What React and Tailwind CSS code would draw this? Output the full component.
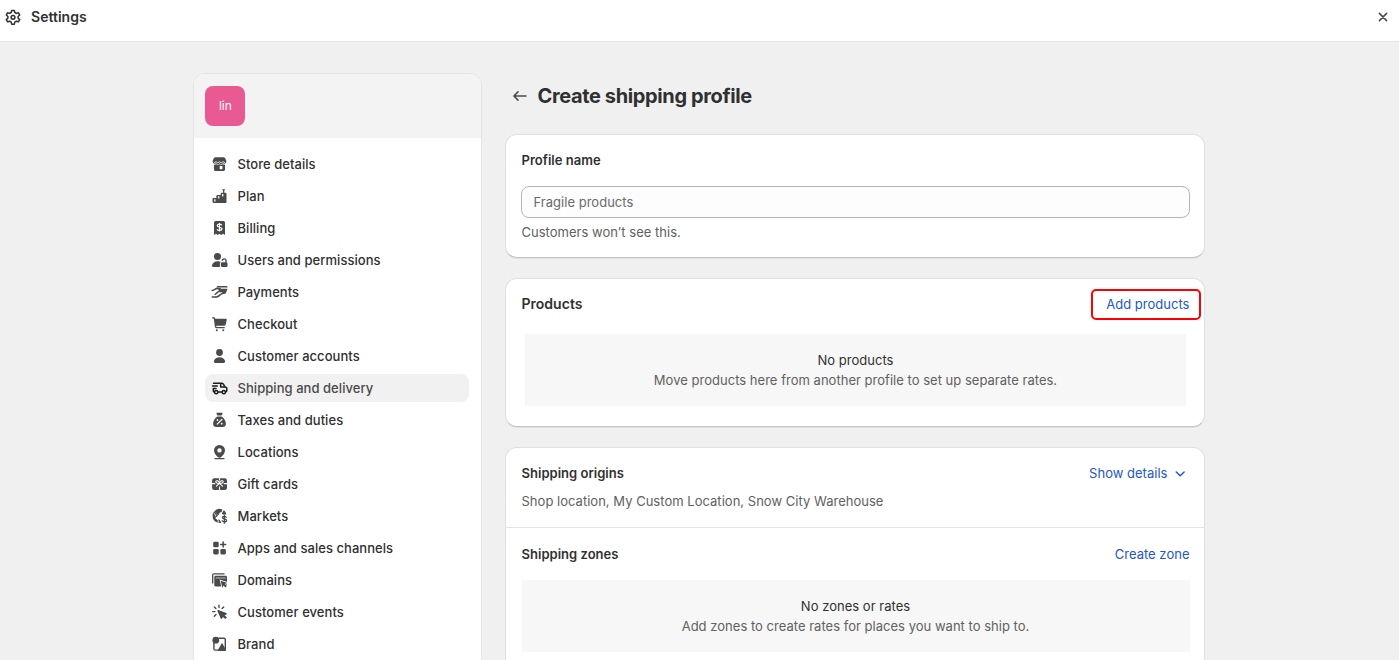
import clsx from 'clsx'

const Icon = ({ children, className, viewBox = '0 0 20 20' }) => (
  <svg viewBox={viewBox} fill="currentColor" className={clsx('h-5 w-5 shrink-0', className)}>
    {children}
  </svg>
)

// nav icons sit half a pixel to the right of their box
const NavIcon = ({ children, className }) => (
  <Icon viewBox="-0.5 0 20 20" className={className}>
    {children}
  </Icon>
)

const GearIcon = () => (
  <Icon className="text-[#303030]">
    <g fill="none" stroke="currentColor" strokeWidth="1.5" strokeLinejoin="round">
      <path d="M8.700 3.400h2.600l.5 2.100 1.500.9 2.100-.6 1.300 2.200-1.600 1.500v1.600l1.600 1.500-1.300 2.200-2.100-.6-1.500.9-.5 2.100H8.700l-.5-2.100-1.500-.9-2.100.6-1.300-2.200 1.600-1.500V9.500L3.300 8l1.300-2.200 2.100.6 1.500-.9z" />
      <circle cx="10" cy="10.300" r="1.900" />
    </g>
  </Icon>
)

const StoreIcon = () => (
  <NavIcon>
    <path d="M6 3.300h8c.7 0 1.300.4 1.700 1l1.100 2.500v.7a2.100 2.100 0 0 1-3.400 1.700 2.200 2.200 0 0 1-3.400 0 2.200 2.200 0 0 1-3.400 0A2.100 2.100 0 0 1 3.200 7.500v-.7l1.100-2.500c.4-.6 1-1 1.700-1z" />
    <path fillRule="evenodd" d="M4.500 10.600c.8.100 1.600 0 2.200-.4 1 .6 2.300.6 3.300 0 1 .6 2.300.6 3.300 0 .6.400 1.400.5 2.200.4v4.900c0 .8-.7 1.500-1.500 1.500H6c-.8 0-1.500-.7-1.500-1.500zm5.700 1.300v3.300h2.700v-3.300z" />
    <path d="M4.500 8.700l2-1 1.800 1.100L10 7.700l1.700 1.100 1.800-1.100 2 1" fill="none" stroke="#fff" strokeWidth=".8" />
  </NavIcon>
)

const PlanIcon = () => (
  <NavIcon>
    <path d="M12.600 3.200h3.200l-1 1.600v2h1.300c.5 0 .9.400.9.900v8.200c0 .6-.4 1.100-1.100 1.100H4.200c-.7 0-1.200-.5-1.200-1.200v-2.700c0-.6.400-1 1-1h2.900V10c0-.6.400-1 1-1h3.300V7.700c0-.5.400-.9.900-.9h1.500v-2z" />
    <path d="M5.400 13.300v2.200M9.200 10.300v2.200M13.200 8v2.500" stroke="#fff" strokeWidth="1.300" />
  </NavIcon>
)

const BillingIcon = () => (
  <NavIcon>
    <path d="M6 3h8a1.500 1.500 0 0 1 1.500 1.500V17l-2-1.300-1.750 1.300L10 15.700 8.250 17 6.500 15.700 4.500 17V4.500A1.500 1.500 0 0 1 6 3z" />
    <path d="M12.300 7.300c-.4-.7-1.200-1.100-2.300-1.100-1.300 0-2.200.6-2.200 1.500 0 2.100 4.600 1 4.600 3.100 0 1-1 1.600-2.400 1.600-1.200 0-2.100-.4-2.500-1.200M10 4.900v8.700" fill="none" stroke="#fff" strokeWidth="1.200" />
  </NavIcon>
)

const UsersIcon = () => (
  <NavIcon>
    <circle cx="8" cy="6.500" r="3.500" />
    <path d="M8 11.200c1.600 0 2.500.3 3.200.8-.5.300-.8.900-.8 1.600V17H3.900c-1 0-1.600-.8-1.400-1.700.5-2.400 2.700-4.100 5.500-4.100z" />
    <path d="M12.700 10.800a1.900 1.900 0 0 1 3.800 0v2" fill="none" stroke="currentColor" strokeWidth="1.400" />
    <rect x="11.400" y="12.300" width="6.600" height="4.700" rx="1.200" />
  </NavIcon>
)

const PaymentsIcon = () => (
  <NavIcon>
    <path d="M8.600 4h8.600c.5 0 .8.300.8.700v.8H6.800C7.200 4.500 7.800 4 8.600 4z" />
    <path d="M8.500 6.700H18l-1.300 3.900c-.3.900-1 1.300-1.900 1.300h-3.300l1.500-1.700H10z" />
    <path d="M2.700 8.500C4.900 8.300 5.800 6.600 7.500 6.600h3M2.700 15.100h3.900c3.100 0 3.400-3 6.400-3.500M5.800 12.300l2.700-2.400 3.300-1.200" fill="none" stroke="currentColor" strokeWidth="1.500" strokeLinecap="round" />
  </NavIcon>
)

const CartIcon = () => (
  <NavIcon>
    <path d="M2.600 3.200h1.700c.7 0 1.200.4 1.300 1l.1.500h10.500c.7 0 1.100.6 1 1.200l-.9 4.300c-.2.900-.9 1.500-1.800 1.500H6.700l.2 1.200h8.300v1.300H6.800c-.7 0-1.200-.5-1.300-1.100L4.200 4.600H2.600z" />
    <circle cx="7.300" cy="16.200" r="1" />
    <circle cx="13.800" cy="16.200" r="1" />
  </NavIcon>
)

const PersonIcon = () => (
  <NavIcon>
    <circle cx="10" cy="6.500" r="3.400" />
    <path d="M10 11.200c2.700 0 5 1.500 5.600 3.900.3 1-.4 1.900-1.400 1.900H5.800c-1 0-1.700-.9-1.400-1.900.6-2.400 2.900-3.900 5.600-3.900z" />
  </NavIcon>
)

const TruckIcon = () => (
  <NavIcon className="text-[#1a1a1a]">
    <g fill="none" stroke="currentColor" strokeWidth="1.500" strokeLinecap="round" strokeLinejoin="round">
      <path d="M4 5.200h8.100c.8 0 1.400.4 1.800 1l1.500 2.700 1.300.6c.4.200.6.500.6.900v2.200c0 .8-.4 1.300-1.100 1.300M12.600 14H8.400M4.900 14c-.8 0-1.100-.4-1.100-1.200v-2.300M3 8h4.800M3.800 10.500h2.700M11.200 5.400v3.500h4.200" />
      <circle cx="6.700" cy="14.200" r="1.600" />
      <circle cx="14.300" cy="14.200" r="1.600" />
    </g>
  </NavIcon>
)

const TaxIcon = () => (
  <NavIcon>
    <path d="M7.700 2.800h4.600c.6 0 .9.600.6 1.100L12 5.500H8L7.100 3.900c-.3-.5 0-1.100.6-1.100zM7.800 6.400h4.400c2.700 2 4.200 4.700 4.200 7.300 0 2.100-1.300 3.300-3.300 3.300H6.900c-2 0-3.300-1.200-3.300-3.300 0-2.600 1.500-5.300 4.200-7.300z" />
    <path d="M12.400 9.500l-4.700 4.600" stroke="#fff" strokeWidth="1.200" strokeLinecap="round" />
    <circle cx="8" cy="10" r=".9" fill="#fff" />
    <circle cx="12.200" cy="13.700" r=".9" fill="#fff" />
  </NavIcon>
)

const PinIcon = () => (
  <NavIcon>
    <path fillRule="evenodd" d="M10 2.900a5.400 5.400 0 0 1 5.500 5.400c0 2.900-1.700 4.900-3.800 6.800-1 .9-2.400.9-3.400 0-2.100-1.900-3.800-3.900-3.800-6.800A5.400 5.400 0 0 1 10 2.900zm0 3.300a2.200 2.200 0 1 0 0 4.400 2.200 2.200 0 0 0 0-4.400z" />
    <path d="M5.500 16.700h9" stroke="currentColor" strokeWidth="1.300" strokeLinecap="round" />
  </NavIcon>
)

const GiftIcon = () => (
  <NavIcon>
    <rect x="2.600" y="4.200" width="14.900" height="11.800" rx="2.300" />
    <g fill="none" stroke="#fff" strokeWidth="1.100" strokeLinecap="round">
      <path d="M10 4v2M10 13v3.300M2.300 9.600h3M14.700 9.600h3" />
      <path d="M10 9.400C8 9.600 6.100 9 6.300 7.600c.3-1.700 3.200-.9 3.700 1.800.5-2.700 3.400-3.500 3.700-1.800.2 1.400-1.700 2-3.700 1.800zM9.800 9.600l-2.900 2.600M10.200 9.600l2.900 2.600" />
    </g>
  </NavIcon>
)

const MarketsIcon = () => (
  <NavIcon>
    <path d="M12.900 3.600A7 7 0 0 0 4.700 5.400L8.300 9l1.300-.3.400-1.900 2.100-.8z" />
    <path d="M3.800 6.600A7 7 0 0 0 8 16.700l.3-2.500-2.200-1.700.2-2z" />
    <path d="M4.300 5.900l3.300 3.500-1.300 1.400" fill="none" stroke="currentColor" strokeWidth="1.300" />
    <path d="M8.900 13.300l1.400.8 1.600 2.900H9.200z" />
    <path d="M14.300 4.300l-2.100 3.100 1.100 1 3.600.2c-.3-1.700-1.200-3.300-2.600-4.300z" />
    <path d="M16.700 11.300c-.4-.7-1.100-1-2-1-1.100 0-1.800.5-1.800 1.300 0 1.900 4.100.9 4.100 2.800 0 .9-.9 1.400-2.100 1.400-1.100 0-1.900-.4-2.300-1.100M14.800 9.100v8.200" fill="none" stroke="currentColor" strokeWidth="1.300" strokeLinecap="round" />
  </NavIcon>
)

const AppsIcon = () => (
  <NavIcon>
    <rect x="3.700" y="3.700" width="5.500" height="5.500" rx="1.300" />
    <rect x="3.700" y="10.900" width="5.500" height="5.500" rx="1.300" />
    <rect x="10.900" y="10.900" width="5.500" height="5.500" rx="1.300" />
    <path d="M13.650 4v5M11.150 6.500h5" stroke="currentColor" strokeWidth="1.500" strokeLinecap="round" />
  </NavIcon>
)

const DomainsIcon = () => (
  <NavIcon>
    <path d="M3.200 13V5c0-.7.500-1.200 1.200-1.200h10.200" fill="none" stroke="currentColor" strokeWidth="1.300" strokeLinecap="round" />
    <path d="M6.200 5.700h9.900c.8 0 1.400.6 1.400 1.400v8c0 .8-.6 1.400-1.400 1.400H6.200c-.8 0-1.400-.6-1.400-1.400v-8c0-.8.6-1.400 1.400-1.400z" />
    <path d="M6.200 8h10" stroke="#aaa" strokeWidth="1.200" />
    <path d="M11.200 10.700l6.600 2.200-2.500 1.200 2 2-1.300 1.300-2-2-1.200 2.300z" stroke="#fff" strokeWidth="1.600" paintOrder="stroke" />
  </NavIcon>
)

const EventsIcon = () => (
  <NavIcon>
    <path d="M9.500 3.200v2.300M4.800 4.900l1.600 1.700M14.200 4.900l-1.600 1.700M3.200 9.600h2.300M4.800 14.300l1.700-1.700" stroke="currentColor" strokeWidth="1.400" strokeLinecap="round" />
    <path d="M8.900 8l7.900 2.900c.7.300.7 1.200 0 1.500l-1.600.8 2.200 2.200-1.700 1.700-2.200-2.200-.9 1.500c-.3.700-1.200.6-1.500-.1L7.900 9C7.700 8.400 8.300 7.800 8.900 8z" />
  </NavIcon>
)

const BrandIcon = () => (
  <NavIcon>
    <circle cx="6.300" cy="6.200" r="3.400" />
    <path d="M9 4.300h5.500c.8 0 1.300.5 1.300 1.300v9.200c0 .8-.5 1.300-1.300 1.300H5.700c-.8 0-1.300-.5-1.300-1.300V9" fill="none" stroke="currentColor" strokeWidth="1.400" />
    <path d="M11.900 9.700c.3-.5.900-.5 1.200 0l3.300 6c.3.600 0 1.300-.7 1.300H9.300c-.7 0-1-.7-.7-1.300z" />
  </NavIcon>
)

const navItems = [
  { label: 'Store details', icon: StoreIcon },
  { label: 'Plan', icon: PlanIcon },
  { label: 'Billing', icon: BillingIcon },
  { label: 'Users and permissions', icon: UsersIcon },
  { label: 'Payments', icon: PaymentsIcon },
  { label: 'Checkout', icon: CartIcon },
  { label: 'Customer accounts', icon: PersonIcon },
  { label: 'Shipping and delivery', icon: TruckIcon, active: true },
  { label: 'Taxes and duties', icon: TaxIcon },
  { label: 'Locations', icon: PinIcon },
  { label: 'Gift cards', icon: GiftIcon },
  { label: 'Markets', icon: MarketsIcon },
  { label: 'Apps and sales channels', icon: AppsIcon },
  { label: 'Domains', icon: DomainsIcon },
  { label: 'Customer events', icon: EventsIcon },
  { label: 'Brand', icon: BrandIcon },
]

const Card = ({ children, className }) => (
  <section
    className={clsx(
      'rounded-xl border border-[#e0e0e0] border-b-[#c4c4c4] bg-white shadow-[0_1px_0_rgba(0,0,0,0.06)]',
      className
    )}
  >
    {children}
  </section>
)

const EmptyState = ({ title, text, className }) => (
  <div className={clsx('flex h-[72px] flex-col items-center justify-center bg-[#f7f7f7] leading-5', className)}>
    <p className="text-[#303030]">{title}</p>
    <p className="text-[#616161]">{text}</p>
  </div>
)

export default function App() {
  return (
    <div className="h-[660px] overflow-hidden bg-[#f0f0f0] font-['Inter',sans-serif] text-[13px] tracking-[0.02px] text-[#303030]">
      <header className="flex h-[42px] items-center justify-between border-b border-[#e6e6e6] bg-white pr-[6px] pb-[7px] pl-[3px]">
        <div className="flex items-center gap-2">
          <GearIcon />
          <h1 className="text-sm font-semibold">Settings</h1>
        </div>
        <button type="button" aria-label="Close">
          <Icon className="text-[#4a4a4a]">
            <path d="M6.400 6.400l7.200 7.200M13.600 6.400l-7.200 7.200" stroke="currentColor" strokeWidth="1.500" strokeLinecap="round" />
          </Icon>
        </button>
      </header>

      <div className="flex items-start gap-[23px] pl-[193px]">
        <aside className="mt-[31px] h-[620px] w-[289px] shrink-0 overflow-hidden rounded-t-xl border border-[#e3e3e3] bg-white">
          <div className="flex h-16 bg-[#f3f3f3] pt-3 pl-[11.400px]">
            <div className="flex h-10 w-10 items-center justify-center rounded-lg bg-[#ea5a92] text-xs text-white">
              lin
            </div>
          </div>
          <nav className="flex flex-col gap-1 pt-3 pr-3 pl-[11px]">
            {navItems.map(({ label, icon: ItemIcon, active }) => (
              <a
                key={label}
                className={clsx(
                  'flex h-7 items-center gap-[8.500px] rounded-lg pl-1 font-medium',
                  active ? 'bg-[#f1f1f1] text-[#4a4a4a]' : 'text-[#303030]'
                )}
              >
                <span className="h-5 text-[#4a4a4a]">
                  <ItemIcon />
                </span>
                <span className="leading-5 tracking-[0.05px]">{label}</span>
              </a>
            ))}
          </nav>
        </aside>

        <main className="w-[700px] pt-10">
          <div className="flex h-7 items-center gap-2 pl-[4.500px]">
            <Icon className="text-[#4a4a4a]">
              <path d="M16 10H4.300M8 5.900L3.900 10 8 14.100" fill="none" stroke="currentColor" strokeWidth="1.500" strokeLinecap="round" strokeLinejoin="round" />
            </Icon>
            <h2 className="text-xl font-bold tracking-[-0.37px]">Create shipping profile</h2>
          </div>

          <Card className="mt-6 h-[124px] pt-[15px] pr-[14px] pl-[15px]">
            <h3 className="pl-[0.500px] font-semibold leading-5">Profile name</h3>
            <input
              type="text"
              placeholder="Fragile products"
              className="mt-4 block h-8 w-full rounded-lg border border-[#b5b5b5] bg-[#fdfdfd] px-[11.500px] tracking-[0.02px] placeholder:text-[#6a6a6a]"
            />
            <p className="mt-1 pl-[0.500px] leading-5 text-[#616161]">Customers won’t see this.</p>
          </Card>

          <Card className="mt-5 h-[149px] pt-[10px] pr-[14px] pl-[15px]">
            <div className="flex h-[31px] items-center justify-between">
              <h3 className="pb-px pl-[0.500px] text-sm leading-5 font-semibold">Products</h3>
              <button
                type="button"
                className="mr-[-11px] flex h-[31px] w-[110px] items-center justify-end rounded-[5px] border-2 border-[#ff0000] pr-[9.500px] text-[#2257c9]"
              >
                Add products
              </button>
            </div>
            <EmptyState
              title="No products"
              text="Move products here from another profile to set up separate rates."
              className="mt-[14px] mr-1 ml-1"
            />
          </Card>

          <Card className="mt-5 h-[240px]">
            <div className="h-[80px] border-b border-[#e3e3e3] pt-[15px] pr-[14px] pl-[15.500px] leading-5">
              <div className="flex items-center justify-between">
                <h3 className="font-semibold">Shipping origins</h3>
                <button type="button" className="mr-[0.500px] flex items-center gap-[2px] text-[#2257c9]">
                  Show details
                  <Icon>
                    <path d="M6.300 9l3.900 3.700L14.100 9" fill="none" stroke="currentColor" strokeWidth="1.500" strokeLinecap="round" strokeLinejoin="round" />
                  </Icon>
                </button>
              </div>
              <p className="mt-2 text-[#616161]">Shop location, My Custom Location, Snow City Warehouse</p>
            </div>
            <div className="pt-4 pr-[14.500px] pl-[15.500px]">
              <div className="flex items-center justify-between leading-5">
                <h3 className="font-semibold">Shipping zones</h3>
                <button type="button" className="text-[#2257c9]">Create zone</button>
              </div>
              <EmptyState
                title="No zones or rates"
                text="Add zones to create rates for places you want to ship to."
                className="mt-4"
              />
            </div>
          </Card>
        </main>
      </div>
    </div>
  )
}
